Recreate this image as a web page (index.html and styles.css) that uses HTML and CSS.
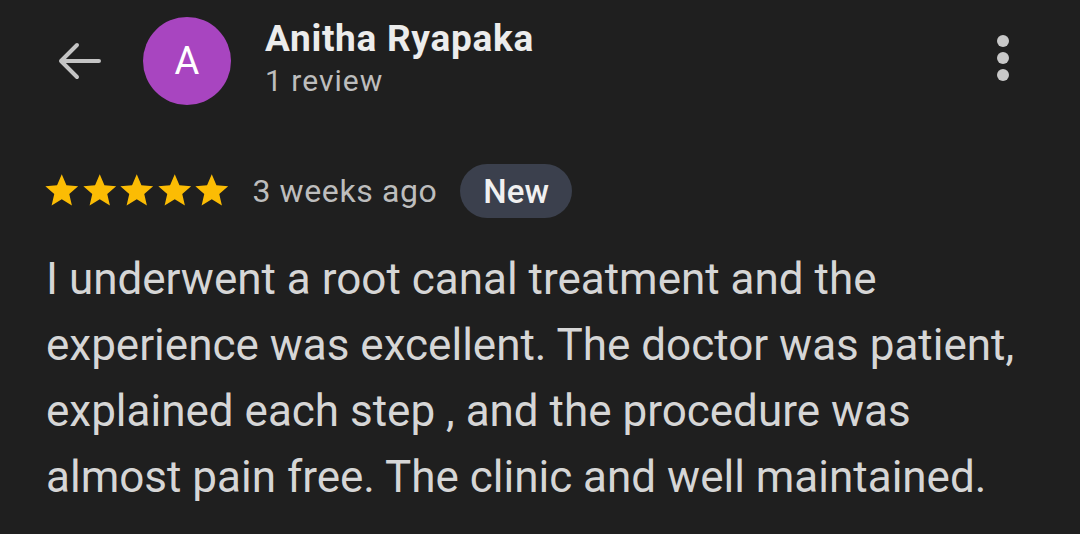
FILE: index.html
```html
<!DOCTYPE html>
<html lang="en">
<head>
    <meta charset="UTF-8">
    <meta name="viewport" content="width=device-width, initial-scale=1.0">
    <title>Review</title>
    <link rel="stylesheet" href="styles.css">
</head>
<body>

    <!-- Header -->
    <div class="header">
        <svg class="back" width="50" height="40" viewBox="0 0 50 40">
            <path d="M46 20 H8 M24 4 L8 20 L24 36" fill="none" stroke="#c4c4c4" stroke-width="4" stroke-linecap="round" stroke-linejoin="round"/>
        </svg>
        <div class="avatar">A</div>
        <div class="who">
            <div class="name">Anitha Ryapaka</div>
            <div class="count">1 review</div>
        </div>
        <div class="more">
            <span></span><span></span><span></span>
        </div>
    </div>

    <!-- Rating row -->
    <div class="meta">
        <div class="stars">
            <svg viewBox="0 0 24 24"><path d="M12 1.5l3 7 7.5.6-5.7 4.9 1.7 7.4L12 17.5l-6.5 3.9 1.7-7.4L1.5 9.1 9 8.5z"/></svg>
            <svg viewBox="0 0 24 24"><path d="M12 1.5l3 7 7.5.6-5.7 4.9 1.7 7.4L12 17.5l-6.5 3.9 1.7-7.4L1.5 9.1 9 8.5z"/></svg>
            <svg viewBox="0 0 24 24"><path d="M12 1.5l3 7 7.5.6-5.7 4.9 1.7 7.4L12 17.5l-6.5 3.9 1.7-7.4L1.5 9.1 9 8.5z"/></svg>
            <svg viewBox="0 0 24 24"><path d="M12 1.5l3 7 7.5.6-5.7 4.9 1.7 7.4L12 17.5l-6.5 3.9 1.7-7.4L1.5 9.1 9 8.5z"/></svg>
            <svg viewBox="0 0 24 24"><path d="M12 1.5l3 7 7.5.6-5.7 4.9 1.7 7.4L12 17.5l-6.5 3.9 1.7-7.4L1.5 9.1 9 8.5z"/></svg>
        </div>
        <span class="ago">3 weeks ago</span>
        <span class="badge">New</span>
    </div>

    <!-- Review text -->
    <p class="review">
        I underwent a root canal treatment and the<br>
        experience was excellent. The doctor was patient,<br>
        explained each step , and the procedure was<br>
        almost pain free. The clinic and well maintained.
    </p>

</body>
</html>
```

FILE: styles.css
```css
* {
    margin: 0;
    padding: 0;
    box-sizing: border-box;
}

body {
    font-family: Roboto, "Noto Sans", sans-serif;
    background-color: #1f1f1f;
    color: #e3e3e3;
    overflow: hidden;
}

/* Header */
.header {
    display: flex;
    align-items: center;
    padding: 17px 0 0 53px;
    height: 105px;
}

.back {
    width: 50px;
    height: 40px;
    margin-right: 40px;
}

.avatar {
    width: 88px;
    height: 88px;
    border-radius: 50%;
    background-color: #a845c0;
    color: #fff;
    font-size: 38px;
    display: flex;
    align-items: center;
    justify-content: center;
    flex-shrink: 0;
}

.who {
    margin-left: 34px;
    align-self: flex-start;
    margin-top: 0;
}

.name {
    font-size: 37px;
    font-weight: 700;
    letter-spacing: 0.7px;
    color: #ececec;
    line-height: 44px;
}

.count {
    font-size: 30px;
    letter-spacing: 1px;
    color: #bdbdbd;
    line-height: 40px;
}

.more {
    margin-left: auto;
    margin-right: 71px;
    display: flex;
    flex-direction: column;
    gap: 5px;
    margin-top: -6px;
}

.more span {
    display: block;
    width: 12px;
    height: 12px;
    border-radius: 50%;
    background-color: #c8c8c8;
}

/* Rating row */
.meta {
    display: flex;
    align-items: center;
    padding-left: 43px;
    margin-top: 59px;
    height: 54px;
}

.stars {
    display: flex;
    gap: 0;
}

.stars svg {
    width: 37.5px;
    height: 37.5px;
    fill: #fbbc04;
}

.ago {
    margin-left: 22px;
    font-size: 32px;
    letter-spacing: 0.6px;
    color: #bdbdbd;
}

.badge {
    margin-left: 23px;
    height: 54px;
    padding: 0 23px;
    border-radius: 27px;
    background-color: #3b404d;
    color: #f0f0f0;
    font-size: 33px;
    font-weight: 500;
    display: flex;
    align-items: center;
}

/* Review body */
.review {
    margin-top: 28px;
    padding-left: 46px;
    font-size: 44px;
    line-height: 66px;
    color: #d6d6d6;
}
```
